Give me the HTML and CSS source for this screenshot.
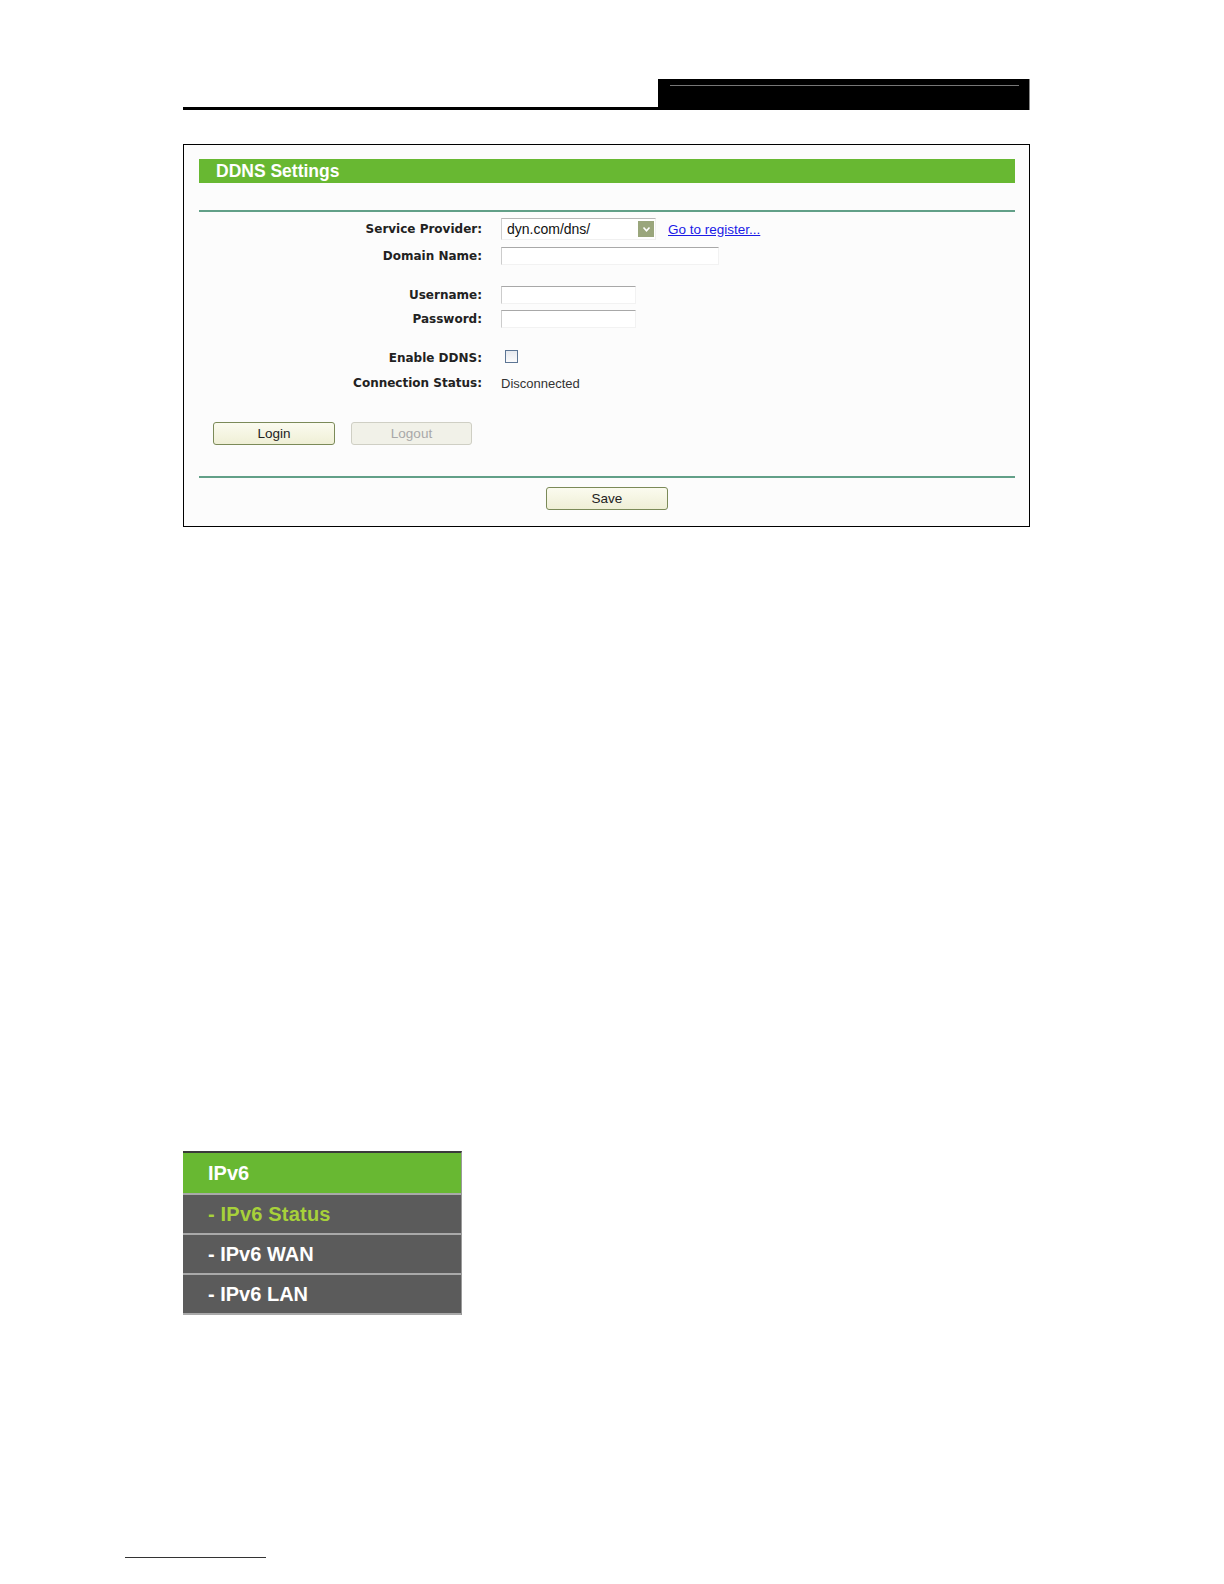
FILE: index.html
```html
<!DOCTYPE html>
<html>
<head>
<meta charset="utf-8">
<link rel="stylesheet" href="styles.css">
</head>
<body>
<div class="header">
  <div class="header-rule"></div>
  <div class="header-block"><div class="header-inner-line"></div></div>
</div>

<div class="panel">
  <div class="panel-title">DDNS Settings</div>
  <div class="rule rule-top"></div>

  <div class="form">
    <div class="row row-1">
      <div class="label">Service Provider:</div>
      <div class="value">
        <div class="select">
          <span class="select-text">dyn.com/dns/</span>
          <span class="select-arrow"><svg width="9" height="7" viewBox="0 0 9 7"><path d="M1.5 1.5 L4.5 4.8 L7.5 1.5" fill="none" stroke="#fff" stroke-width="1.6"/></svg></span>
        </div>
        <a class="link" href="#">Go to register...</a>
      </div>
    </div>
    <div class="row row-2">
      <div class="label">Domain Name:</div>
      <div class="value"><div class="input input-wide"></div></div>
    </div>
    <div class="row row-3">
      <div class="label">Username:</div>
      <div class="value"><div class="input input-short"></div></div>
    </div>
    <div class="row row-4">
      <div class="label">Password:</div>
      <div class="value"><div class="input input-short"></div></div>
    </div>
    <div class="row row-5">
      <div class="label">Enable DDNS:</div>
      <div class="value"><div class="checkbox"></div></div>
    </div>
    <div class="row row-6">
      <div class="label">Connection Status:</div>
      <div class="value status">Disconnected</div>
    </div>
  </div>

  <div class="buttons">
    <div class="btn">Login</div>
    <div class="btn btn-disabled">Logout</div>
  </div>

  <div class="rule rule-bottom"></div>
  <div class="save-row"><div class="btn">Save</div></div>
</div>

<div class="menu">
  <div class="menu-head">IPv6</div>
  <div class="menu-item menu-active">- IPv6 Status</div>
  <div class="menu-item">- IPv6 WAN</div>
  <div class="menu-item">- IPv6 LAN</div>
</div>

<div class="footer-line"></div>
</body>
</html>
```

FILE: styles.css
```css
html, body {
  margin: 0;
  padding: 0;
  background: #ffffff;
}
body {
  font-family: "Liberation Sans", Arial, sans-serif;
  padding-top: 79px;
}

/* header */
.header {
  margin-left: 183px;
  width: 847px;
  display: flex;
  align-items: flex-end;
}
.header-rule {
  flex: 1;
  height: 3px;
  background: #000;
}
.header-block {
  width: 372px;
  height: 31px;
  background: #000;
  border-right: 1px solid #888;
  box-sizing: border-box;
  padding-top: 6px;
}
.header-inner-line {
  height: 1px;
  background: #777;
  margin: 0 10px 0 12px;
}

/* panel */
.panel {
  margin: 34px 0 0 183px;
  width: 847px;
  height: 383px;
  box-sizing: border-box;
  border: 1px solid #000;
  background: #fcfcfc;
  padding: 14px 14px 0 15px;
}
.panel-title {
  height: 24px;
  line-height: 24px;
  background: #68b832;
  color: #fff;
  font-weight: bold;
  font-size: 17.5px;
  padding-left: 17px;
}
.rule {
  height: 2px;
  background: #62a088;
}
.rule-top {
  margin-top: 27px;
}

.form {
  display: flex;
  flex-direction: column;
}
.row {
  display: grid;
  grid-template-columns: 283px 1fr;
  column-gap: 19px;
  align-items: center;
}
.row-1 { margin-top: 4px; height: 26px; }
.row-2 { height: 27px; }
.row-3 { margin-top: 14px; height: 24px; }
.row-4 { height: 24px; }
.row-5 { margin-top: 15px; height: 24px; }
.row-6 { height: 26px; }

.label {
  text-align: right;
  font-family: "DejaVu Sans", Verdana, sans-serif;
  font-weight: bold;
  font-size: 12px;
  color: #222;
}
.value {
  display: flex;
  align-items: center;
}
.select {
  width: 155px;
  height: 22px;
  box-sizing: border-box;
  border-top: 1px solid #b8b8b8;
  border-left: 1px solid #cfcfcf;
  border-right: 1px solid #f0f0f0;
  border-bottom: 1px solid #f0f0f0;
  background: #fff;
  display: flex;
  align-items: center;
  justify-content: space-between;
  padding: 0 1px 0 5px;
}
.select-text {
  font-size: 14px;
  color: #111;
}
.select-arrow {
  width: 16px;
  height: 16px;
  background: #9aa67c;
  display: flex;
  align-items: center;
  justify-content: center;
}
.link {
  margin-left: 12px;
  font-size: 13.5px;
  color: #1a1ae6;
  text-decoration: underline;
}
.input {
  height: 18px;
  box-sizing: border-box;
  border-top: 1px solid #a8a8a8;
  border-left: 1px solid #cccccc;
  border-right: 1px solid #f2f2f2;
  border-bottom: 1px solid #f2f2f2;
  background: #fff;
}
.input-wide { width: 218px; }
.input-short { width: 135px; }
.checkbox {
  margin-left: 4px;
  width: 13px;
  height: 13px;
  box-sizing: border-box;
  border: 1px solid #5c7594;
  background: linear-gradient(#e6e9ee, #fbfbfc);
  margin-top: -3px;
}
.status {
  font-size: 13px;
  color: #333;
}

/* buttons */
.buttons {
  margin-top: 26px;
  padding-left: 14px;
  display: flex;
  gap: 16px;
}
.btn {
  width: 122px;
  height: 23px;
  box-sizing: border-box;
  border: 1px solid #7b8a58;
  border-radius: 3px;
  background: linear-gradient(#fbfbef, #efefd6);
  font-size: 13.5px;
  color: #222;
  display: flex;
  align-items: center;
  justify-content: center;
}
.btn-disabled {
  width: 121px;
  border-color: #cfcfc4;
  background: #f1f1e8;
  color: #a8a8a8;
}
.rule-bottom {
  margin-top: 31px;
}
.save-row {
  margin-top: 9px;
  display: flex;
  justify-content: center;
}

/* menu */
.menu {
  margin: 624px 0 0 183px;
  width: 279px;
  border-top: 2px solid #3a3a3a;
  border-right: 1px solid #9a9a9a;
  box-sizing: border-box;
  font-weight: bold;
  font-size: 20px;
}
.menu-head {
  height: 40px;
  line-height: 40px;
  background: #68b832;
  color: #fff;
  padding-left: 25px;
}
.menu-item {
  height: 38px;
  line-height: 38px;
  border-top: 2px solid #a9a9a9;
  background: #5b5b5b;
  color: #fff;
  padding-left: 25px;
}
.menu-item:last-child {
  border-bottom: 2px solid #a9a9a9;
}
.menu-active {
  color: #a7d13a;
  letter-spacing: 0.2px;
}

.footer-line {
  margin: 242px 0 0 125px;
  width: 141px;
  height: 1px;
  background: #333;
}
```
